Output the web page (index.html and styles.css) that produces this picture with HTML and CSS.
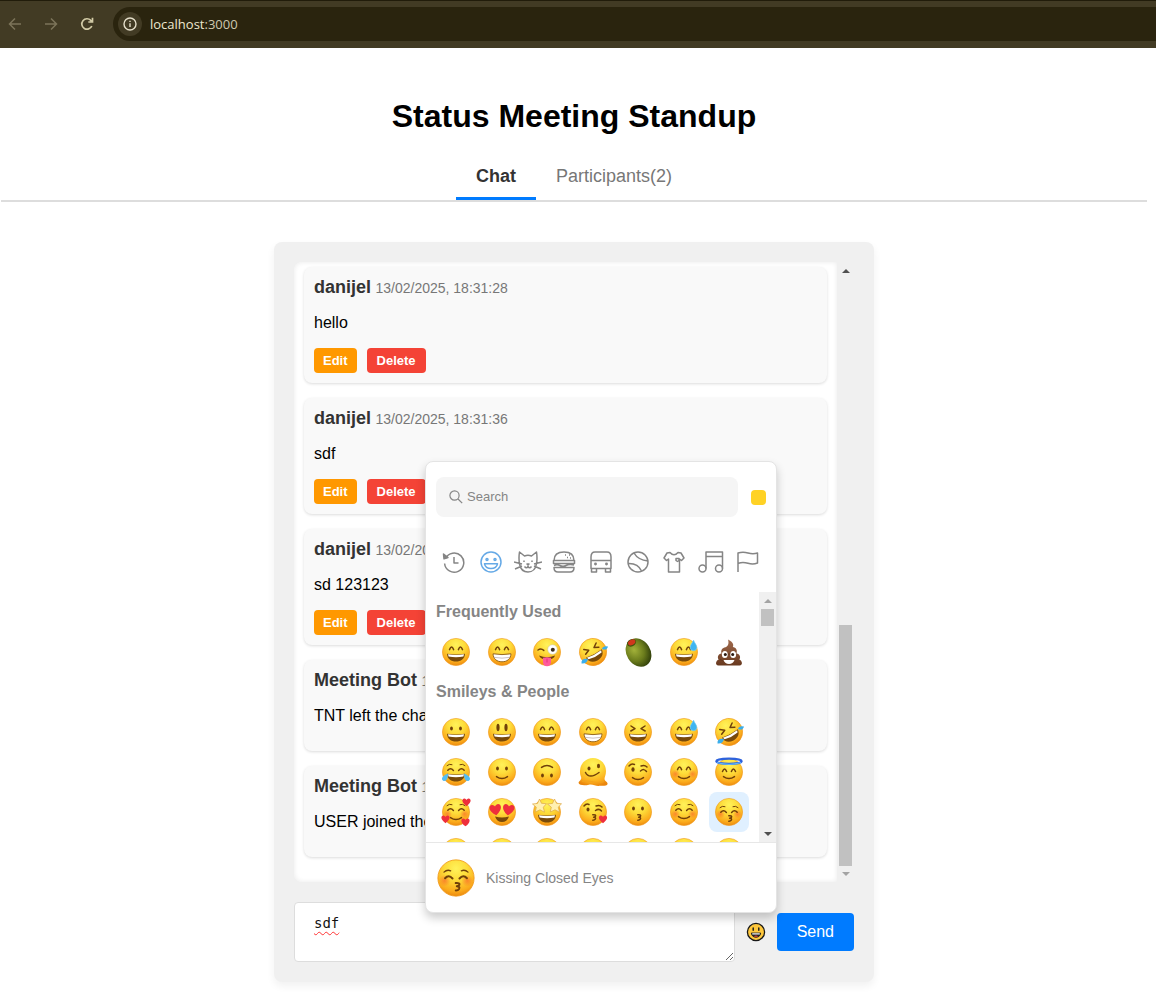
FILE: index.html
```html
<!DOCTYPE html>
<html lang="en">
<head>
<meta charset="utf-8">
<title>Status Meeting Standup</title>
<link rel="stylesheet" href="styles.css">
</head>
<body>
<svg class="sprite" aria-hidden="true">
  <defs>
    <radialGradient id="skin" cx="50%" cy="24%" r="78%">
      <stop offset="0" stop-color="#fff25a"/><stop offset=".4" stop-color="#fddc3a"/><stop offset=".8" stop-color="#fbab1c"/><stop offset="1" stop-color="#ea850c"/>
    </radialGradient>
    <radialGradient id="oliveFill" cx="40%" cy="35%" r="65%">
      <stop offset="0" stop-color="#a3b23a"/><stop offset=".6" stop-color="#6b7c1c"/><stop offset="1" stop-color="#36450c"/>
    </radialGradient>
    <linearGradient id="pooFill" x1="0" y1="0" x2="0" y2="1">
      <stop offset="0" stop-color="#a06a4d"/><stop offset="1" stop-color="#68391f"/>
    </linearGradient>
    <radialGradient id="blush"><stop offset="0" stop-color="#f9652b" stop-opacity=".65"/><stop offset="1" stop-color="#f9652b" stop-opacity="0"/></radialGradient>
    <circle id="base" cx="15" cy="15" r="13.6" fill="url(#skin)" stroke="#f0981c" stroke-width=".6"/>
    <g id="grin">
      <path d="M6 16.8Q15 18.4 24 16.8C23.7 22 20 24.6 15 24.6S6.300 22 6 16.800Z" fill="#784a0b"/>
      <path d="M7 17.200Q15 18.600 23 17.200L22.400 19.400Q15 21 7.600 19.400Z" fill="#fff"/>
    </g>
    <g id="teeth">
      <path d="M6 16.8Q15 18.400 24 16.800C23.700 22 20 24.800 15 24.800S6.300 22 6 16.800Z" fill="#fff" stroke="#8a5a12" stroke-width=".9"/>
      <path d="M6.800 20.300Q15 22 23.200 20.300" fill="none" stroke="#a99" stroke-width=".6"/>
    </g>
    <path id="arches" d="M8.500 12.600Q10.600 7.600 12.600 12.600M17.400 12.600Q19.400 7.600 21.500 12.600" class="ink"/>
    <path id="closed" d="M6.800 13.200Q9.500 10.200 12.400 13.400M17.600 13.400Q20.500 10.200 23.200 13.200" class="ink"/>
    <path id="brows" d="M6 8.600Q8.200 6.500 11 7.600M19 7.600Q21.800 6.500 24 8.600" class="ink thin"/>
    <g id="dots" fill="#704009"><ellipse cx="10.500" cy="11.500" rx="1.400" ry="2.100"/><ellipse cx="19.500" cy="11.500" rx="1.400" ry="2.100"/></g>
    <path id="smile" d="M9.500 19.600Q15 23.600 20.500 19.600" class="ink"/>
    <path id="kissmouth" d="M14.800 17.800Q18.300 17.500 17.500 19.200 16.800 20.100 15.600 20.200 18.300 20.300 17.300 22.200 16.500 23.400 14.800 23.300" class="ink"/>
    <g id="cheeks"><circle cx="6.500" cy="17" r="4.500" fill="url(#blush)"/><circle cx="23.500" cy="17" r="4.500" fill="url(#blush)"/></g>
    <path id="heart" d="M0 4.200C-5.500.4-4.600-3.300-2.300-3.600-.9-3.700 0-2.200 0-2.200S.9-3.700 2.300-3.600C4.600-3.300 5.500.4 0 4.200Z" fill="#ee2f3c"/>
    <path id="drop" d="M0-5.400C1 -2.500 3.400-.500 3.300 1.900A3.300 3.300 0 0 1-3.300 1.900C-3.300-.5-1-2.500 0-5.400Z" fill="#3fb4f0" stroke="#79d2fa" stroke-width=".6"/>

    <symbol id="smiling" viewBox="0 0 30 30"><use href="#base"/><use href="#arches"/><use href="#grin"/></symbol>
    <symbol id="beaming" viewBox="0 0 30 30"><use href="#base"/><use href="#arches"/><use href="#teeth"/></symbol>
    <symbol id="grinning" viewBox="0 0 30 30"><use href="#base"/><use href="#dots"/><use href="#grin"/></symbol>
    <symbol id="smiley" viewBox="0 0 30 30"><use href="#base"/><g fill="#704009"><ellipse cx="11" cy="10.500" rx="1.600" ry="3.700"/><ellipse cx="19" cy="10.500" rx="1.600" ry="3.700"/></g><use href="#grin"/></symbol>
    <symbol id="laughing" viewBox="0 0 30 30"><use href="#base"/><path d="M8 9L12 11.700 7.800 14M22 9L18 11.700 22.200 14" class="ink"/><use href="#grin"/></symbol>
    <symbol id="sweat" viewBox="0 0 30 30"><use href="#base"/><use href="#arches"/><use href="#grin"/><use href="#drop" x="24.500" y="8.500"/></symbol>
    <symbol id="rofl" viewBox="0 0 30 30"><g transform="rotate(-28 15 15)"><use href="#base"/><path d="M8 8.500L12 11.500 7.500 13.500M22 8.500L18 11.500 22.500 13.500" class="ink"/><use href="#grin"/></g><path d="M24 12Q25 8.500 30 9.500 29 14 24 12ZM10 22Q9 27 3.500 26.500 3 21 10 22Z" fill="#39aeed"/></symbol>
    <symbol id="joy" viewBox="0 0 30 30"><use href="#base"/><use href="#closed"/><use href="#brows"/><use href="#grin"/><path d="M7 16.500C7 22 5.500 24.500 2.600 23.900-.2 23 .200 19 7 16.500ZM23 16.500C23 22 24.500 24.500 27.400 23.900 30.200 23 29.800 19 23 16.500Z" fill="#55bdf3"/></symbol>
    <symbol id="zany" viewBox="0 0 30 30"><use href="#base"/><path d="M6 13Q9 11 11.800 13.400" class="ink"/><circle cx="20.500" cy="12.500" r="4.800" fill="#fff" stroke="#c9bfa4" stroke-width=".5"/><circle cx="20.800" cy="12.700" r="2" fill="#3a2d1c"/><path d="M7 18.500Q15 22 23 18.500 22 22.500 15 22.500 8.500 22.500 7 18.500Z" fill="#704009"/><path d="M11 20.800Q15 19.500 19 20.800V25Q18.600 29.300 15 29.300T11 25Z" fill="#ff5a9c"/><path d="M15 21.500V25.500" stroke="#dc2e74" stroke-width=".8"/></symbol>
    <symbol id="olive" viewBox="0 0 30 30"><ellipse cx="15.500" cy="15.500" rx="12" ry="15" transform="rotate(-32 15.500 15.500)" fill="url(#oliveFill)"/><ellipse cx="8.500" cy="5.800" rx="4.800" ry="3.500" transform="rotate(-28 8.500 5.800)" fill="#43540e"/><ellipse cx="8.700" cy="5.400" rx="3.900" ry="2.600" transform="rotate(-28 8.700 5.400)" fill="#d0371c"/></symbol>
    <symbol id="poo" viewBox="0 0 30 30"><path d="M14 2.500C17.500 4 20.500 7 18.800 10 22 10.500 23.700 13 22.400 16.500 26 17 27 20.500 25.300 22.500 28 23.200 29.500 28.300 25.500 28.600H4.500C.500 28.300 2 23.200 4.700 22.500 3 20.500 4 17 7.600 16.500 6.300 13 8.500 10.800 11.500 10.200 14.500 9 15 6 14 2.500Z" fill="url(#pooFill)"/><path d="M9 16.500Q15 18.500 21.500 15.500M6 22.500Q9 24 10 23.700" fill="none" stroke="#5b3019" stroke-width=".6"/><g fill="#fff"><ellipse cx="10.800" cy="17.500" rx="2.900" ry="3.500"/><ellipse cx="19.200" cy="17.500" rx="2.900" ry="3.500"/><path d="M9.500 23H20.500Q19 27 15 27T9.500 23Z"/></g><circle cx="11.300" cy="17.600" r="1.500" fill="#2b1a10"/><circle cx="18.700" cy="17.600" r="1.500" fill="#2b1a10"/></symbol>
    <symbol id="slight" viewBox="0 0 30 30"><use href="#base"/><use href="#dots"/><use href="#smile"/></symbol>
    <symbol id="upside" viewBox="0 0 30 30"><use href="#base"/><g transform="rotate(180 15 15)"><use href="#dots"/><use href="#smile"/></g></symbol>
    <symbol id="melting" viewBox="0 0 30 30"><path d="M2 14A13 13 0 0 1 28 14C28 18 26.500 20 26.500 22 26.800 24.500 29.800 25 29.600 27 29 29.300 25 28.600 22 28.800 18 29.500 15 27 11 27.700 7 28.600 1 28.500 .600 26 .500 24 3.500 23.500 3.200 20.500 2.300 18 2 17 2 14Z" fill="url(#skin)"/><g fill="#704009"><ellipse cx="11" cy="11.500" rx="1.500" ry="2"/><ellipse cx="20.500" cy="9" rx="1.500" ry="2.200"/></g><path d="M7.500 15.500C10 20.500 15 20 21 15.500" class="ink"/><path d="M4 24.500C12 22.500 18 27.500 26 24.500" fill="none" stroke="#f4a21c"/></symbol>
    <symbol id="wink" viewBox="0 0 30 30"><use href="#base"/><ellipse cx="10" cy="12.500" rx="1.600" ry="2.200" fill="#704009"/><path d="M6 9Q8.500 6 11.500 7.500M18 9Q21.500 7.500 24 10M17.500 14Q21 11 23.500 14.500" class="ink"/><use href="#smile" y="1"/></symbol>
    <symbol id="blushing" viewBox="0 0 30 30"><use href="#base"/><use href="#cheeks"/><use href="#arches"/><use href="#smile"/></symbol>
    <symbol id="innocent" viewBox="0 0 30 30"><use href="#base"/><path d="M8.500 14.500Q10.600 9.600 12.600 14.500M17.400 14.500Q19.400 9.600 21.500 14.500" class="ink"/><use href="#smile"/><ellipse cx="15" cy="4.300" rx="12.700" ry="2.600" fill="none" stroke="#2d62dd" stroke-width="2.200"/><path d="M3 5.500Q15 9.200 27 5.500" fill="none" stroke="#62b8f8" stroke-width="1.300"/></symbol>
    <symbol id="hearts" viewBox="0 0 30 30"><use href="#base"/><use href="#cheeks"/><use href="#closed"/><use href="#brows"/><use href="#smile" y="1"/><use href="#heart" x="25.500" y="5"/><use href="#heart" x="4.500" y="22"/><use href="#heart" x="24.500" y="25"/></symbol>
    <symbol id="hearteyes" viewBox="0 0 30 30"><use href="#base"/><path d="M8 19.500Q15 21.500 22 19.500 20 25 15 25T8 19.500Z" fill="#784a0b"/><g transform="translate(8.500 12.500) rotate(-8) scale(1.400)"><use href="#heart"/></g><g transform="translate(21.500 12.500) rotate(8) scale(1.400)"><use href="#heart"/></g></symbol>
    <symbol id="starstruck" viewBox="0 0 30 30"><use href="#base"/><use href="#grin" y="1"/><path id="star" d="M7.500 2L9.500 6.300 14.500 6.700 11.300 10.200 12.500 15.200 8 12.800 3.300 15 4.300 10.200 .500 7 5.500 6.400Z" fill="#fff0b0" stroke="#dca748" stroke-width=".7"/><use href="#star" x="15"/></symbol>
    <symbol id="kissheart" viewBox="0 0 30 30"><use href="#base"/><ellipse cx="10" cy="12.500" rx="1.500" ry="2" fill="#704009"/><path d="M6 9Q8.500 6 11 7.500M18 9Q21.500 7.500 24 10M17.500 13.500Q21 11 23.500 14" class="ink"/><use href="#kissmouth"/><use href="#heart" x="25" y="22"/></symbol>
    <symbol id="kissing" viewBox="0 0 30 30"><use href="#base"/><use href="#dots"/><use href="#kissmouth"/></symbol>
    <symbol id="relaxed" viewBox="0 0 30 30"><use href="#base"/><use href="#cheeks"/><use href="#closed"/><use href="#brows"/><use href="#smile"/></symbol>
    <symbol id="kissclosed" viewBox="0 0 30 30"><use href="#base"/><use href="#cheeks"/><use href="#closed" y="2"/><use href="#brows" y="2"/><use href="#kissmouth" y="1"/></symbol>
    <symbol id="plain" viewBox="0 0 30 30"><use href="#base"/><use href="#dots"/></symbol>
  </defs>
</svg>

<header class="browser">
  <button class="nav off" aria-label="Back"><svg viewBox="0 0 16 16"><path d="M14 8H2.500M8 2.500L2.500 8 8 13.500"/></svg></button>
  <button class="nav off" aria-label="Forward"><svg viewBox="0 0 16 16"><path d="M2 8h11.500M8 2.500L13.500 8 8 13.500"/></svg></button>
  <button class="nav" aria-label="Reload"><svg viewBox="0 0 16 16"><path d="M12.800 10A5.200 5.200 0 1 1 11.800 4.400L13.500 6M13.500 1.800V6H9.300"/></svg></button>
  <div class="address">
    <span class="info"><svg viewBox="0 0 16 16"><circle cx="8" cy="8" r="6"/><path d="M8 7.300V11M8 4.700V6"/></svg></span>
    <span>localhost<span class="port">:3000</span></span>
  </div>
</header>

<main class="page">
  <h1>Status Meeting Standup</h1>
  <nav class="tabs">
    <button class="tab active">Chat</button>
    <button class="tab">Participants(2)</button>
  </nav>

  <section class="chat">
    <div class="history">
      <div class="messages">
        <article class="message">
          <div class="meta"><strong>danijel</strong> <time>13/02/2025, 18:31:28</time></div>
          <p>hello</p>
          <div class="actions"><button class="edit">Edit</button><button class="delete">Delete</button></div>
        </article>
        <article class="message">
          <div class="meta"><strong>danijel</strong> <time>13/02/2025, 18:31:36</time></div>
          <p>sdf</p>
          <div class="actions"><button class="edit">Edit</button><button class="delete">Delete</button></div>
        </article>
        <article class="message">
          <div class="meta"><strong>danijel</strong> <time>13/02/2025</time></div>
          <p>sd 123123</p>
          <div class="actions"><button class="edit">Edit</button><button class="delete">Delete</button></div>
        </article>
        <article class="message">
          <div class="meta"><strong>Meeting Bot</strong> <time>13/02/2025</time></div>
          <p>TNT left the chat</p>
        </article>
        <article class="message">
          <div class="meta"><strong>Meeting Bot</strong> <time>13/02/2025</time></div>
          <p>USER joined the chat</p>
        </article>
      </div>
      <div class="scroll" aria-hidden="true"><i class="up dark"></i><span class="rail low"><b></b></span><i class="down"></i></div>
    </div>

    <form class="composer">
      <textarea aria-label="Message" spellcheck="false">sdf</textarea>
      <button type="button" class="emoji-toggle" aria-label="Emoji"><svg viewBox="0 0 20 20"><circle cx="10" cy="10" r="8.600" fill="#ffc83d" stroke="#181818" stroke-width="1.300"/><path d="M7.200 6V8.200M12.800 6V8.200" stroke="#181818" stroke-width="1.400" stroke-linecap="round"/><path d="M5.300 11H14.700Q14 15.300 10 15.300T5.300 11Z" fill="#222" stroke="#181818" stroke-width=".8"/><path d="M6.200 11.300H13.800V12.500H6.200Z" fill="#fff"/><path d="M7.800 14.200Q10 12.800 12.200 14.200 10 15.500 7.800 14.200Z" fill="#f04438"/></svg></button>
      <button type="button" class="send">Send</button>

      <aside class="picker">
        <div class="search-row">
          <label class="search"><svg viewBox="0 0 14 14"><circle cx="5.500" cy="5.500" r="4.600"/><path d="M9 9L13.200 13.200"/></svg><input type="text" placeholder="Search" aria-label="Search"></label>
          <button type="button" class="tone" aria-label="Skin tone"></button>
        </div>
        <div class="categories">
          <button type="button" aria-label="Frequently Used"><svg viewBox="0 0 24 24"><path d="M3.500 8.500A9.600 9.600 0 1 1 2.600 13.500M12 7V13H16.500"/><path d="M1.500 4L2 8.800 6 7.500Z" fill="#858585"/></svg></button>
          <button type="button" class="on" aria-label="Smileys"><svg viewBox="0 0 24 24"><circle cx="12" cy="12" r="10"/><circle cx="8" cy="9.500" r="1"/><circle cx="16" cy="9.500" r="1"/><path d="M5.500 13.800H18.500Q17.500 18.500 12 18.500T5.500 13.800Z"/></svg></button>
          <button type="button" aria-label="Animals"><svg class="wide" viewBox="0 0 28 24"><path d="M5.500 14Q4.500 8 5.500 2L10.500 6Q14 4.500 17.500 6L22.500 2Q23.500 8 22.500 14 21 22 14 22T5.500 14ZM0 12L8 14M1 19L8 16M28 12L20 14M27 19L20 16M10.500 16.500Q12.500 19 14 16.500 15.500 19 17.500 16.500M13 14H15L14 15ZM10 10.500V12M18 10.500V12"/></svg></button>
          <button type="button" aria-label="Food"><svg viewBox="0 0 24 24"><path d="M2 10.500C2 4.500 5 2 12 2S22 4.500 22 10.500ZM1.500 10.500H22.500V13.500H1.500ZM2 15.500Q5 14 8 15.500T14 15.500 22 15M2 17.500H22Q22 22 18 22H6Q2 22 2 17.500ZM13 5H14M17 5H18M15 7.500H16M18 8H19"/></svg></button>
          <button type="button" aria-label="Travel"><svg viewBox="0 0 24 24"><path d="M2 18.500V7Q2 2 6 2H18Q22 2 22 7V18.500ZM2 10.500H22M2.500 18.500V22H7.500V18.500M16.500 18.500V22H21.500V18.500"/><circle cx="6.500" cy="14" r=".7"/><circle cx="17.500" cy="14" r=".7"/></svg></button>
          <button type="button" aria-label="Activities"><svg viewBox="0 0 24 24"><circle cx="12" cy="12" r="10"/><path d="M8 3Q12 10 22 11M2 13.500Q12 13 15.500 21"/></svg></button>
          <button type="button" aria-label="Objects"><svg viewBox="0 0 24 24"><path d="M8 2.500Q12 7 16 2.500L19 3 22 8 19.500 10.500 17.500 9V22H6.500V9L4.500 10.500 2 8 5 3ZM14 8.500H17V10.500L15.500 11.500 14 10.500Z"/></svg></button>
          <button type="button" aria-label="Symbols"><svg class="wide" viewBox="0 0 26 24"><circle cx="4.500" cy="18.500" r="3.500"/><circle cx="21" cy="18.500" r="3.500"/><path d="M8 18.500V2H24.500V18.500M8 6.500H24.500"/></svg></button>
          <button type="button" aria-label="Flags"><svg viewBox="0 0 24 24"><path d="M2 22V3Q7 1.500 12 3T21.500 3V13Q17 15 12 13.300T2.500 13.200"/></svg></button>
        </div>
        <div class="emoji-body">
          <div class="emoji-list">
            <h2>Frequently Used</h2>
            <div class="grid">
              <button type="button" aria-label="Smile"><svg><use href="#smiling"/></svg></button><button type="button" aria-label="Beaming"><svg><use href="#beaming"/></svg></button><button type="button" aria-label="Winking tongue"><svg><use href="#zany"/></svg></button><button type="button" aria-label="Rolling laugh"><svg><use href="#rofl"/></svg></button><button type="button" aria-label="Olive"><svg><use href="#olive"/></svg></button><button type="button" aria-label="Sweat smile"><svg><use href="#sweat"/></svg></button><button type="button" aria-label="Poo"><svg><use href="#poo"/></svg></button>
            </div>
            <h2>Smileys &amp; People</h2>
            <div class="grid">
              <button type="button" aria-label="Grinning"><svg><use href="#grinning"/></svg></button><button type="button" aria-label="Smiley"><svg><use href="#smiley"/></svg></button><button type="button" aria-label="Smile"><svg><use href="#smiling"/></svg></button><button type="button" aria-label="Beaming"><svg><use href="#beaming"/></svg></button><button type="button" aria-label="Laughing"><svg><use href="#laughing"/></svg></button><button type="button" aria-label="Sweat smile"><svg><use href="#sweat"/></svg></button><button type="button" aria-label="Rolling laugh"><svg><use href="#rofl"/></svg></button>
              <button type="button" aria-label="Joy"><svg><use href="#joy"/></svg></button><button type="button" aria-label="Slight smile"><svg><use href="#slight"/></svg></button><button type="button" aria-label="Upside down"><svg><use href="#upside"/></svg></button><button type="button" aria-label="Melting"><svg><use href="#melting"/></svg></button><button type="button" aria-label="Wink"><svg><use href="#wink"/></svg></button><button type="button" aria-label="Blush"><svg><use href="#blushing"/></svg></button><button type="button" aria-label="Innocent"><svg><use href="#innocent"/></svg></button>
              <button type="button" aria-label="Smiling hearts"><svg><use href="#hearts"/></svg></button><button type="button" aria-label="Heart eyes"><svg><use href="#hearteyes"/></svg></button><button type="button" aria-label="Star struck"><svg><use href="#starstruck"/></svg></button><button type="button" aria-label="Kissing heart"><svg><use href="#kissheart"/></svg></button><button type="button" aria-label="Kissing"><svg><use href="#kissing"/></svg></button><button type="button" aria-label="Relaxed"><svg><use href="#relaxed"/></svg></button><button type="button" class="picked" aria-label="Kissing closed eyes"><svg><use href="#kissclosed"/></svg></button>
              <button type="button" aria-label="Kissing smile"><svg><use href="#plain"/></svg></button><button type="button" aria-label="Yum"><svg><use href="#plain"/></svg></button><button type="button" aria-label="Tongue"><svg><use href="#plain"/></svg></button><button type="button" aria-label="Wink tongue"><svg><use href="#plain"/></svg></button><button type="button" aria-label="Zany"><svg><use href="#plain"/></svg></button><button type="button" aria-label="Squint tongue"><svg><use href="#plain"/></svg></button><button type="button" aria-label="Money mouth"><svg><use href="#plain"/></svg></button>
            </div>
          </div>
          <div class="scroll" aria-hidden="true"><i class="up"></i><span class="rail high"><b></b></span><i class="down dark"></i></div>
        </div>
        <div class="preview"><svg><use href="#kissclosed"/></svg><span>Kissing Closed Eyes</span></div>
      </aside>
    </form>
  </section>
</main>
</body>
</html>
```

FILE: styles.css
```css
* { box-sizing: border-box; }

body {
  margin: 0;
  background: #fff;
  color: #000;
  font-family: "Liberation Sans", Arial, sans-serif;
  font-size: 16px;
}

button {
  border: 0;
  padding: 0;
  background: none;
  font-family: inherit;
  cursor: pointer;
}

.sprite { position: absolute; width: 0; height: 0; }
.ink { fill: none; stroke: #704009; stroke-width: 1.5; stroke-linecap: round; stroke-linejoin: round; }
.thin { stroke-width: 1; }

/* Browser toolbar */
.browser {
  display: flex;
  align-items: center;
  height: 48px;
  padding: 0 0 1px 7px;
  border-top: 1px solid #211c0a;
  background: #423b24;
}
.nav { width: 16px; height: 16px; margin-right: 20px; }
.nav + .nav + .nav { margin-right: 18px; }
.nav svg { display: block; width: 16px; height: 16px; fill: none; stroke: #d2cba6; stroke-width: 1.7; }
.nav.off svg { stroke: #7c7459; stroke-width: 1.5; }
.address {
  display: flex;
  flex: 1;
  align-items: center;
  gap: 8px;
  height: 34px;
  padding-left: 5px;
  border-radius: 17px 0 0 17px;
  background: #2a240e;
  color: #eee8d0;
  font-family: "Open Sans", sans-serif;
  font-size: 13px;
}
.port { color: #cec8af; }
.info { display: grid; place-items: center; width: 24px; height: 24px; border-radius: 50%; background: #423b24; }
.info svg { width: 16px; height: 16px; fill: none; stroke: #e5dfca; stroke-width: 1.4; }

/* Page heading and tabs */
.page { margin-right: 8px; padding: 50px 1px 16px 1px; }
h1 { margin: 0 0 21px; font-size: 32px; line-height: 36px; text-align: center; }
.tabs { display: flex; justify-content: center; border-bottom: 2px solid #ddd; }
.tab {
  padding: 10px 20px;
  border-bottom: 3px solid transparent;
  color: #777;
  font-size: 18px;
  line-height: 22px;
}
.tab.active { border-color: #007bff; color: #333; font-weight: bold; }

/* Chat panel */
.chat {
  max-width: 600px;
  margin: 40px auto 0;
  padding: 20px;
  border-radius: 8px;
  background: #f0f0f0;
  box-shadow: 0 4px 8px rgba(0, 0, 0, .06);
}
.history { display: flex; }
.messages {
  flex: 1;
  display: flex;
  flex-direction: column;
  gap: 15px;
  padding: 5px 10px 25px;
  border-radius: 8px 0 0 8px;
  background: #fff;
  box-shadow: inset 0 0 5px #eaeaea;
}
.message {
  padding: 10px;
  border-radius: 8px;
  background: #f9f9f9;
  box-shadow: 0 1px 3px rgba(0, 0, 0, .14);
}
.meta { line-height: 21px; }
.meta strong { color: #333; font-size: 18px; }
.meta time { color: #777; font-size: 14px; }
.message p { margin: 14px 0 16px; line-height: 19px; }
.actions { display: flex; gap: 10px; }
.actions button {
  padding: 5px 10px;
  border-radius: 4px;
  color: #fff;
  font-size: 13px;
  font-weight: bold;
  line-height: 15px;
}
.actions .edit { padding: 5px 9px; background: #ff9800; }
.actions .delete { background: #f44336; }

/* Scrollbars */
.scroll { display: flex; flex-direction: column; align-items: center; width: 17px; padding: 7px 0 6px; background: #f0f0f0; }
.scroll i { border: solid transparent; border-width: 0 4px; }
.scroll .up { border-bottom: 4px solid #a3a3a3; }
.scroll .down { border-top: 4px solid #a3a3a3; }
.scroll .up.dark { border-bottom-color: #505050; }
.scroll .down.dark { border-top-color: #505050; }
.rail { display: flex; flex: 1; flex-direction: column; width: 13px; padding: 6px 0; }
.rail b { background: #c1c1c1; }
.low { justify-content: flex-end; }
.low b { height: 41%; }
.high b { height: 17px; }

/* Message form */
.composer { position: relative; display: flex; align-items: center; margin-top: 20px; }
.composer textarea {
  flex: 1;
  height: 60px;
  padding: 10px 19px;
  border: 1px solid #ddd;
  border-radius: 4px;
  outline: 0;
  background: #fff;
  color: #111;
  font: 14px/20px "DejaVu Sans Mono", monospace;
  text-decoration: underline wavy #f33 1px;
  text-underline-offset: 3px;
}
.emoji-toggle { width: 20px; height: 20px; margin: 0 11px; }
.emoji-toggle svg { display: block; width: 20px; height: 20px; }
.send { padding: 10px 20px; border-radius: 4px; background: #007bff; color: #fff; font-size: 16px; line-height: 18px; }

/* Emoji picker */
.picker {
  position: absolute;
  right: 77px;
  bottom: 49px;
  display: flex;
  flex-direction: column;
  width: 352px;
  height: 452px;
  overflow: hidden;
  border: 1px solid #e4e4e4;
  border-radius: 8px;
  background: #fff;
  box-shadow: 0 5px 10px rgba(0, 0, 0, .2);
}
.search-row { display: flex; align-items: center; gap: 13px; padding: 15px 10px; }
.search {
  display: flex;
  flex: 1;
  align-items: center;
  gap: 4px;
  height: 40px;
  padding: 0 13px;
  border-radius: 8px;
  background: #f5f5f5;
}
.search svg { width: 14px; height: 14px; fill: none; stroke: #868686; stroke-width: 1.2; }
.search input { flex: 1; min-width: 0; padding: 0; border: 0; outline: 0; background: none; font: 13px/18px "Liberation Sans", Arial, sans-serif; }
.search input::placeholder { color: #858585; }
.tone { width: 15px; height: 15px; border-radius: 4px; background: #ffd225; }
.categories { display: grid; grid-template-columns: repeat(9, 1fr); padding: 15px 10px; }
.categories button { display: grid; place-items: center; height: 30px; }
.categories svg { width: 24px; height: 24px; fill: none; stroke: #858585; stroke-width: 1.5; stroke-linejoin: round; }
.categories .wide { width: 28px; }
.categories .on svg { stroke: #65a9e6; }
.emoji-body { display: flex; flex: 1; min-height: 0; }
.emoji-list { flex: 1; overflow: hidden; padding: 0 10px; }
.emoji-list h2 { margin: 0; color: #858585; font-size: 16px; line-height: 40px; }
.grid { display: grid; grid-template-columns: repeat(7, 40px); justify-content: space-between; }
.grid button { display: grid; place-items: center; height: 40px; border-radius: 8px; }
.grid svg { width: 30px; height: 30px; }
.grid .picked { background: #e0f0ff; }
.preview {
  display: flex;
  align-items: center;
  gap: 10px;
  height: 70px;
  padding: 0 10px;
  border-top: 1px solid #e7e7e7;
  color: #858585;
  font-size: 14px;
}
.preview svg { width: 40px; height: 40px; }
```
